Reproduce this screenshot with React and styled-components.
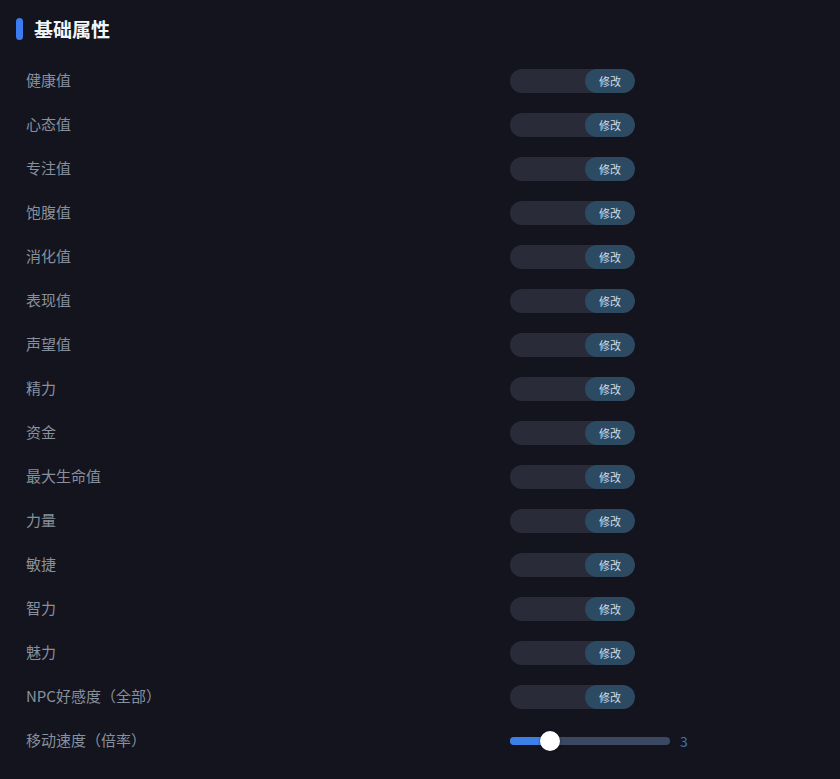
import React, { useState } from "react";
import styled, { createGlobalStyle } from "styled-components";

const GlobalStyle = createGlobalStyle`
  html, body {
    margin: 0;
    padding: 0;
    background: #13141e;
  }
  body {
    font-family: "Noto Sans CJK SC", "Liberation Sans", sans-serif;
  }
`;

const attributes = [
  "健康值",
  "心态值",
  "专注值",
  "饱腹值",
  "消化值",
  "表现值",
  "声望值",
  "精力",
  "资金",
  "最大生命值",
  "力量",
  "敏捷",
  "智力",
  "魅力",
  "NPC好感度（全部）",
];

export default function App() {
  const [speed] = useState(3);
  const min = 1;
  const max = 9;
  const pct = ((speed - min) / (max - min)) * 100;

  return (
    <>
      <GlobalStyle />
      <Page>
        <Title>基础属性</Title>
        <List>
          {attributes.map((name) => (
            <Row key={name}>
              <Label>{name}</Label>
              <Field>
                <input type="text" />
                <button>修改</button>
              </Field>
            </Row>
          ))}
          <Row>
            <Label>移动速度（倍率）</Label>
            <SliderWrap>
              <Track>
                <Fill style={{ width: `${pct}%` }} />
                <Thumb style={{ left: `${pct}%` }} />
              </Track>
              <Value>{speed}</Value>
            </SliderWrap>
          </Row>
        </List>
      </Page>
    </>
  );
}

const Page = styled.div`
  width: 840px;
  height: 779px;
  box-sizing: border-box;
  padding: 17px 0 0 16px;
  background: #13141e;
`;

const Title = styled.h2`
  margin: 0;
  display: flex;
  align-items: center;
  gap: 11px;
  font-size: 19px;
  font-weight: 700;
  line-height: 24px;
  color: #f2f4f7;
  &::before {
    content: "";
    width: 7px;
    height: 22px;
    border-radius: 4px;
    background: #3b7cf0;
  }
`;

const List = styled.div`
  display: flex;
  flex-direction: column;
  gap: 20px;
  padding: 28px 0 0 10px;
`;

const Row = styled.div`
  display: flex;
  align-items: center;
  height: 24px;
`;

const Label = styled.span`
  width: 484px;
  font-size: 15px;
  line-height: 22px;
  margin-top: -2px;
  color: #88909c;
  white-space: nowrap;
`;

const Field = styled.div`
  display: flex;
  width: 125px;
  height: 24px;
  border-radius: 12px;
  overflow: hidden;
  background: #2a2b38;
  input {
    flex: 1;
    min-width: 0;
    border: none;
    outline: none;
    background: transparent;
    color: #d0d4dc;
    padding: 0 10px;
  }
  button {
    width: 50px;
    border: none;
    border-radius: 12px;
    background: #2d4a63;
    color: #d4dde6;
    font-family: inherit;
    font-size: 11px;
    padding: 0;
    cursor: pointer;
  }
`;

const SliderWrap = styled.div`
  display: flex;
  align-items: center;
  gap: 10px;
`;

const Track = styled.div`
  position: relative;
  width: 160px;
  height: 8px;
  border-radius: 4px;
  background: #3c4761;
`;

const Fill = styled.div`
  height: 100%;
  border-radius: 4px;
  background: #3d7fe8;
`;

const Thumb = styled.div`
  position: absolute;
  top: 50%;
  width: 20px;
  height: 20px;
  border-radius: 50%;
  background: #ffffff;
  transform: translate(-50%, -50%);
  box-shadow: 0 0 3px rgba(0, 0, 0, 0.4);
`;

const Value = styled.span`
  font-size: 14px;
  color: #3f73b8;
`;
